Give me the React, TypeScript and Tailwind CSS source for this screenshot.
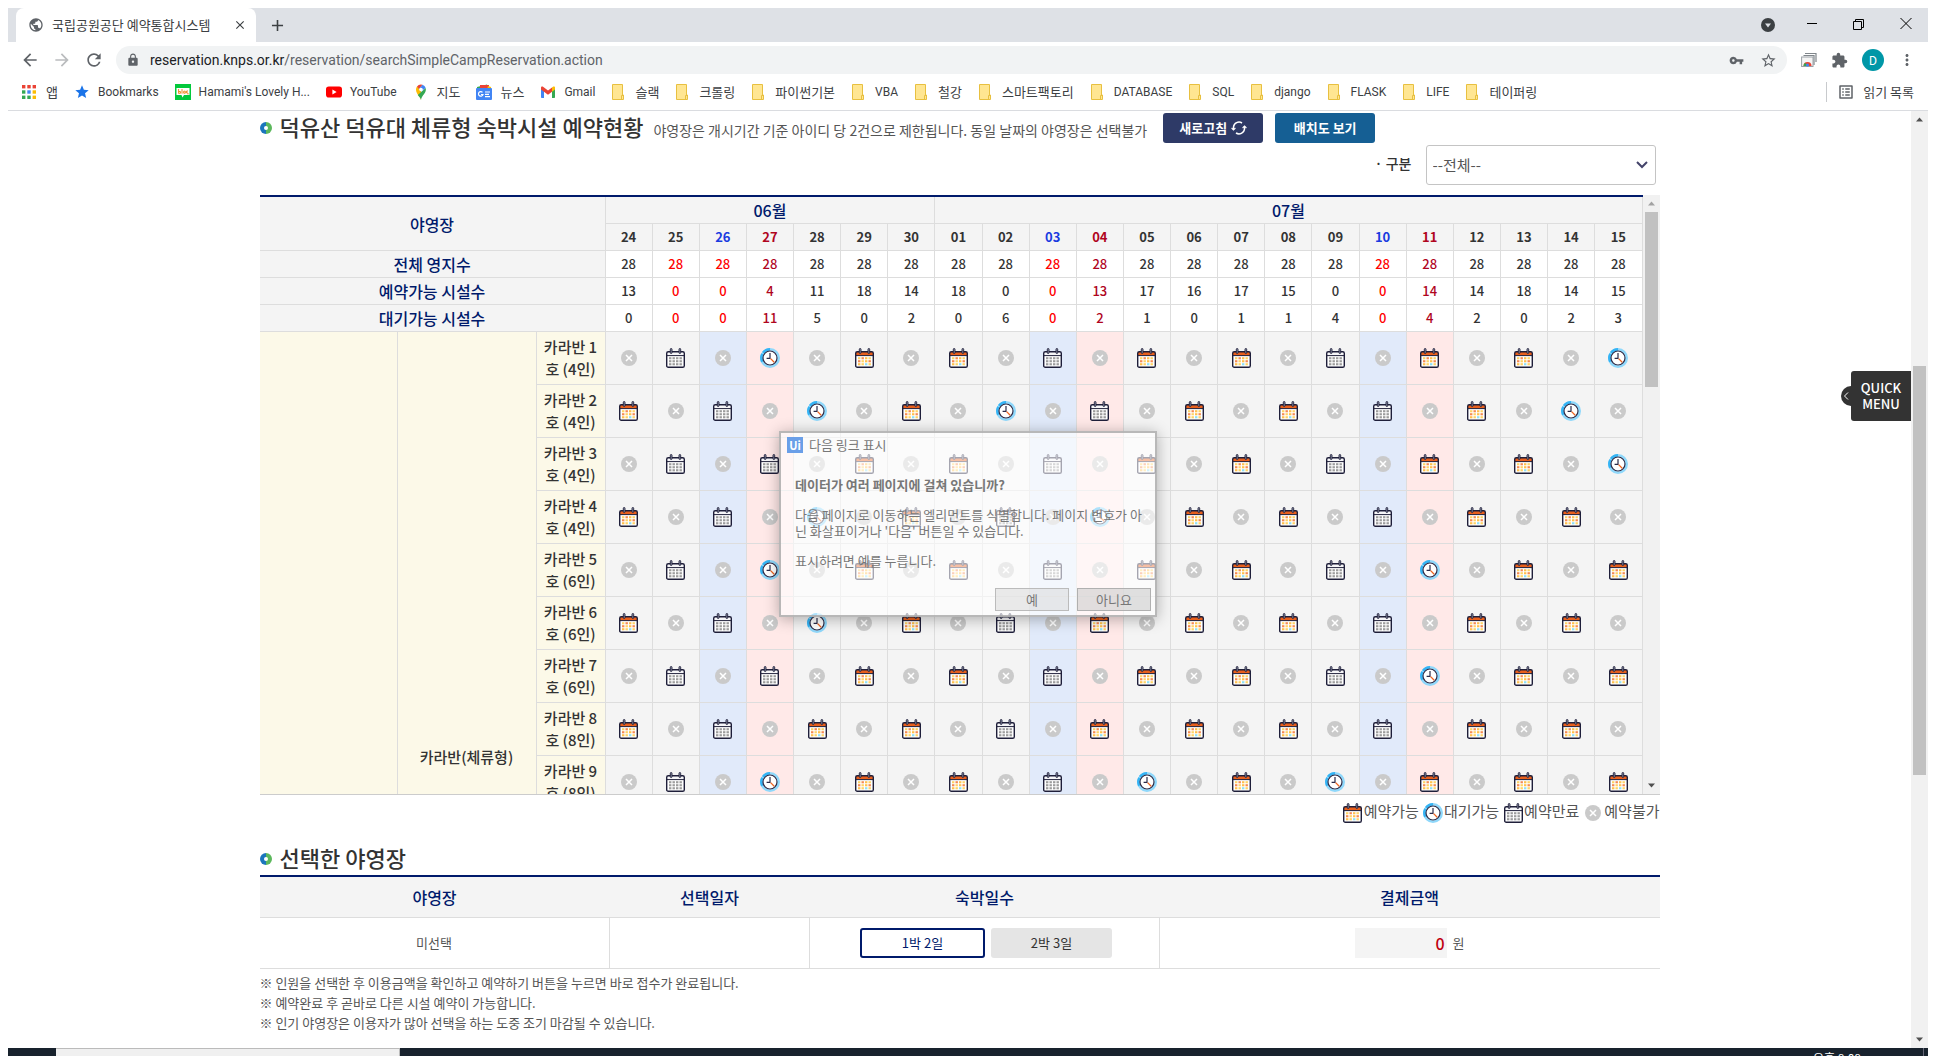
import type { ReactNode } from 'react';
import {
  MdAdd,
  MdArrowBack,
  MdArrowForward,
  MdClose,
  MdExtension,
  MdLock,
  MdMoreVert,
  MdOutlineListAlt,
  MdPublic,
  MdRefresh,
  MdStar,
  MdStarBorder,
  MdVpnKey,
} from 'react-icons/md';

type Status = 'a' | 'w' | 'e' | 'x';

const DAYS = ['24', '25', '26', '27', '28', '29', '30', '01', '02', '03', '04', '05', '06', '07', '08', '09', '10', '11', '12', '13', '14', '15'];
const SATURDAYS = [2, 9, 16];
const SUNDAYS = [3, 10, 17];
const RED_COUNTS = [1, 2, 9, 16];

const TOTALS: { label: string; values: number[] }[] = [
  { label: '전체 영지수', values: DAYS.map(() => 28) },
  { label: '예약가능 시설수', values: [13, 0, 0, 4, 11, 18, 14, 18, 0, 0, 13, 17, 16, 17, 15, 0, 0, 14, 14, 18, 14, 15] },
  { label: '대기가능 시설수', values: [0, 0, 0, 11, 5, 0, 2, 0, 6, 0, 2, 1, 0, 1, 1, 4, 0, 4, 2, 0, 2, 3] },
];

const SITES: { name: string; days: string }[] = [
  { name: '카라반 1호 (4인)', days: 'xexwxaxaxexaxaxexaxaxw' },
  { name: '카라반 2호 (4인)', days: 'axexwxaxwxexaxaxexaxwx' },
  { name: '카라반 3호 (4인)', days: 'xexexaxaxexaxaxexaxaxw' },
  { name: '카라반 4호 (4인)', days: 'axexwxaxexwxaxaxexaxax' },
  { name: '카라반 5호 (6인)', days: 'xexwxaxaxexaxaxexwxaxa' },
  { name: '카라반 6호 (6인)', days: 'axexwxaxexaxaxaxexaxax' },
  { name: '카라반 7호 (6인)', days: 'xexexaxaxexaxaxexwxaxa' },
  { name: '카라반 8호 (8인)', days: 'axexaxaxexaxaxaxexaxax' },
  { name: '카라반 9호 (8인)', days: 'xexwxaxaxexwxaxwxaxaxa' },
];

function CalendarIcon({ color }: { color: boolean }) {
  const warm = ['#ffd466', '#f58a52', '#ffc04d', '#ffd466', '#f58a52', '#ffd466', '#ffc04d', '#f58a52', '#ffc04d', '#ffd466', '#8fe0f5', '#ffd466'];
  return (
    <svg width="19" height="20" viewBox="0 0 19 20" className="shrink-0">
      <rect x="0.7" y="3.7" width="17.6" height="15.6" rx="1.6" fill="#fff" />
      <path d="M.7 7.600V5.200c0-.8.6-1.500 1.400-1.500h14.800c.8 0 1.400.7 1.400 1.500v2.400z" fill={color ? '#e85f1c' : '#f6f6f8'} />
      <rect x="0.7" y="3.7" width="17.6" height="15.6" rx="1.6" fill="none" stroke="#1f1f3a" strokeWidth="1.4" />
      <path d="M.7 7.600h17.600" stroke="#1f1f3a" strokeWidth="1" />
      <rect x="4.3" y="0.500" width="1.700" height="5" rx="0.800" fill="#9094a8" stroke="#1f1f3a" strokeWidth="0.900" />
      <rect x="13" y="0.500" width="1.700" height="5" rx="0.800" fill="#9094a8" stroke="#1f1f3a" strokeWidth="0.900" />
      {[0, 1, 2].map((r) =>
        [0, 1, 2, 3].map((c) => (
          <rect key={`${r}-${c}`} x={3 + c * 3.5} y={9.200 + r * 3} width="2.400" height="2.100" fill={color ? warm[r * 4 + c] : '#9c9c9c'} />
        )),
      )}
    </svg>
  );
}

function ClockIcon() {
  return (
    <svg width="20" height="20" viewBox="0 0 20 20" className="shrink-0">
      <circle cx="10" cy="10" r="8.700" fill="none" stroke="#8fd8fb" strokeWidth="2.600" />
      <path d="M10 1.300A8.700 8.700 0 0 0 2.400 14" fill="none" stroke="#35b4f5" strokeWidth="2.600" strokeDasharray="8 1.200" />
      <circle cx="10" cy="10" r="7" fill="#fff" stroke="#2b2b48" strokeWidth="1.200" />
      <path d="M10 5v5.400H6.600" fill="none" stroke="#2b2b48" strokeWidth="1.200" />
      <path d="M10.600 10.600l3.600 3.600" stroke="#ee6420" strokeWidth="1.300" />
    </svg>
  );
}

function UnavailableIcon() {
  return (
    <svg width="16" height="16" viewBox="0 0 16 16" className="shrink-0">
      <circle cx="8" cy="8" r="8" fill="#cacaca" />
      <path d="M5 5l6 6M11 5l-6 6" stroke="#fff" strokeWidth="1.5" />
    </svg>
  );
}

function StatusIcon({ status }: { status: Status }) {
  if (status === 'a') return <CalendarIcon color />;
  if (status === 'e') return <CalendarIcon color={false} />;
  if (status === 'w') return <ClockIcon />;
  return <UnavailableIcon />;
}

function FolderIcon() {
  return (
    <svg width="16" height="16" viewBox="0 0 16 16" className="shrink-0">
      <path d="M1.500.5h10V11h1v4.500h-11z" fill="#ffe692" stroke="#e8c040" />
      <path d="M10.500 15v-3.500H12" fill="none" stroke="#e8c040" />
    </svg>
  );
}

function AppsIcon() {
  const colors = ['#ea4335', '#ea4335', '#ea4335', '#34a853', '#4285f4', '#fbbc04', '#34a853', '#34a853', '#fbbc04'];
  return (
    <svg width="14" height="14" viewBox="0 0 14 14" className="shrink-0">
      {colors.map((c, i) => (
        <rect key={i} x={(i % 3) * 5.300} y={Math.floor(i / 3) * 5.300} width="3.400" height="3.400" fill={c} />
      ))}
    </svg>
  );
}

function BlogIcon() {
  return (
    <svg width="16" height="16" viewBox="0 0 16 16" className="shrink-0">
      <rect width="16" height="16" fill="#03c93c" />
      <path d="M1.500 4h13v7H9l-1.500 2.500L6.500 11h-5z" fill="#fff" />
      <path d="M3.600 5v4.500M3.600 7.500h1.800v1.800H3.600M7 5v4.700M8.700 7.200h1.600v2H8.700zM13 7h-1.400v2H13v1.500" stroke="#f08a24" fill="none" />
    </svg>
  );
}

function YouTubeIcon() {
  return (
    <svg width="16" height="16" viewBox="0 0 16 16" className="shrink-0">
      <rect y="2.500" width="16" height="11" rx="2.800" fill="#f00" />
      <path d="M6.400 5.600v4.800L10.600 8z" fill="#fff" />
    </svg>
  );
}

function MapsIcon() {
  return (
    <svg width="16" height="16" viewBox="0 0 16 16" className="shrink-0">
      <path d="M8 16c0-3-5-5.500-5-10.500a5 5 0 0 1 1-3l4 3z" fill="#fbbc04" />
      <path d="M4 2.500A5 5 0 0 1 9.500.7L6 5z" fill="#ea4335" />
      <path d="M9.500.7A5 5 0 0 1 12.700 4L8 7.500 6 5z" fill="#4285f4" />
      <path d="M12.700 4c1.300 5-4 7-4.700 12-.5-2-2-3.500-3.200-5z" fill="#34a853" />
      <circle cx="8" cy="5.500" r="1.800" fill="#fff" />
    </svg>
  );
}

function NewsIcon() {
  return (
    <svg width="16" height="16" viewBox="0 0 16 16" className="shrink-0">
      <path d="M1 3l10-2.500 1 4H1z" fill="#34a853" />
      <path d="M4 1h9v4H4z" fill="#ea4335" />
      <path d="M12 2l3 1v3h-4z" fill="#fbbc04" />
      <rect y="4" width="16" height="12" rx="1" fill="#4285f4" />
      <path d="M6.500 8.300A2.300 2.300 0 1 0 7 10.500H5M9 8h5M9 10.300h4M9 12.600h5" stroke="#fff" strokeWidth="1.200" fill="none" />
    </svg>
  );
}

function GmailIcon() {
  return (
    <svg width="16" height="16" viewBox="0 0 16 16" className="shrink-0">
      <path d="M1 4h3v10H1.800A.8.8 0 0 1 1 13.200z" fill="#4285f4" />
      <path d="M12 4h3v9.200a.8.8 0 0 1-.8.800H12z" fill="#34a853" />
      <path d="M12 3.500l1.300-.9c.8-.5 1.700 0 1.700 1V5.500l-3 2.200z" fill="#fbbc04" />
      <path d="M1 5.500V3.600c0-1 .9-1.500 1.700-1L8 6.500l4-3v4.200L8 10.700 1 5.500z" fill="#ea4335" />
    </svg>
  );
}

function PhotoStackIcon() {
  return (
    <svg width="16" height="16" viewBox="0 0 16 16" className="shrink-0">
      <path d="M4 1.500h11V10M2.500 3.500H13V13" fill="none" stroke="#80868b" strokeWidth="1.200" />
      <rect x="0.600" y="5" width="11.400" height="9.500" fill="#f5f5f5" stroke="#9aa0a6" />
      <path d="M2.500 14a4 4 0 0 1 8 0z" fill="#ea4335" />
      <path d="M2.500 14a4 4 0 0 1 1.800-3.200L6.500 14z" fill="#34a853" />
      <circle cx="6.500" cy="13" r="1.500" fill="#4285f4" />
    </svg>
  );
}

function Bullet() {
  return (
    <svg width="12" height="12" viewBox="0 0 12 12" className="shrink-0">
      <path d="M6 0a6 6 0 0 0 0 12z" fill="#1b75bc" />
      <path d="M6 0a6 6 0 0 1 0 12z" fill="#5cb85c" />
      <circle cx="6" cy="6" r="2" fill="#fff" />
    </svg>
  );
}

function Triangle({ up = false, color }: { up?: boolean; color: string }) {
  return (
    <svg width="17" height="17" viewBox="0 0 17 17" className="shrink-0">
      <path d={up ? 'M5 10.500h7L8.500 6.500z' : 'M5 6.500h7l-3.500 4z'} fill={color} />
    </svg>
  );
}

const FOLDERS = ['슬랙', '크롤링', '파이썬기본', 'VBA', '철강', '스마트팩토리', 'DATABASE', 'SQL', 'django', 'FLASK', 'LIFE', '테이퍼링'];

const BOOKMARKS: { label: string; icon: ReactNode }[] = [
  { label: 'Bookmarks', icon: <MdStar size={16} className="shrink-0 text-[#1a73e8]" /> },
  { label: "Hamami's Lovely H...", icon: <BlogIcon /> },
  { label: 'YouTube', icon: <YouTubeIcon /> },
  { label: '지도', icon: <MapsIcon /> },
  { label: '뉴스', icon: <NewsIcon /> },
  { label: 'Gmail', icon: <GmailIcon /> },
  ...FOLDERS.map((label) => ({ label, icon: <FolderIcon /> })),
];

function isLatin(label: string) {
  return label.charCodeAt(0) < 128;
}

function BrowserChrome() {
  return (
    <header className="shrink-0 text-[13px] text-[#3c4043]">
      <div className="flex h-[34px] items-stretch bg-[#dee1e6] pl-2">
        <div className="flex w-60 items-center rounded-t-lg bg-white pl-3 pr-2">
          <MdPublic size={16} className="shrink-0 text-[#5f6368]" />
          <span className="ml-2 flex-1 whitespace-nowrap">국립공원공단 예약통합시스템</span>
          <button type="button" aria-label="탭 닫기" className="p-px">
            <MdClose size={14} />
          </button>
        </div>
        <button type="button" aria-label="새 탭" className="ml-3 text-[#3c4043]">
          <MdAdd size={19} />
        </button>
        <div className="ml-auto flex items-center text-black">
          <button type="button" aria-label="탭 검색" className="mr-8">
            <svg width="14" height="14" viewBox="0 0 14 14">
              <circle cx="7" cy="7" r="7" fill="#3c4043" />
              <path d="M4 5.500h6L7 9.500z" fill="#dee1e6" />
            </svg>
          </button>
          <button type="button" aria-label="최소화" className="mr-9">
            <svg width="10" height="11" viewBox="0 0 10 11">
              <path d="M0 3.500h10" stroke="#000" />
            </svg>
          </button>
          <button type="button" aria-label="이전 크기로" className="mr-9">
            <svg width="11" height="16" viewBox="0 0 11 16" fill="none" stroke="#000">
              <path d="M.5 4.500h8v8h-8zM2.500 4.500v-2h8v8h-2" />
            </svg>
          </button>
          <button type="button" aria-label="닫기" className="mr-4">
            <svg width="12" height="16" viewBox="0 0 12 16" stroke="#000">
              <path d="M.5 1l11 11M11.500 1l-11 11" />
            </svg>
          </button>
        </div>
      </div>
      <div className="flex h-9 items-center pl-3 pr-3 text-[#5f6368]">
        <button type="button" aria-label="뒤로">
          <MdArrowBack size={20} />
        </button>
        <button type="button" aria-label="앞으로" className="ml-3 text-[#babcbe]">
          <MdArrowForward size={20} />
        </button>
        <button type="button" aria-label="새로고침" className="ml-3">
          <MdRefresh size={20} />
        </button>
        <div className="ml-3 flex h-7 flex-1 items-center rounded-full bg-[#f1f3f4] pl-2.5 pr-2.5">
          <MdLock size={14} className="shrink-0" />
          <p className="ml-2.5 flex-1 font-['Roboto',sans-serif] text-[14px]">
            <span className="text-[#202124]">reservation.knps.or.kr</span>/reservation/searchSimpleCampReservation.action
          </p>
          <button type="button" aria-label="비밀번호 관리">
            <MdVpnKey size={15} />
          </button>
          <button type="button" aria-label="북마크 추가" className="ml-4">
            <MdStarBorder size={17} />
          </button>
        </div>
        <div className="ml-3.5 flex items-center gap-3.5">
          <PhotoStackIcon />
          <MdExtension size={17} />
          <span className="flex h-[22px] w-[22px] items-center justify-center rounded-full bg-[#0097a7] text-[12px] text-white">D</span>
          <button type="button" aria-label="메뉴">
            <MdMoreVert size={18} />
          </button>
        </div>
      </div>
      <nav className="flex h-[33px] items-center gap-4 border-b border-[#dadce0] pl-3.5 pr-3.5 pb-1">
        <a href="#apps" className="flex items-center gap-2.5">
          <AppsIcon />앱
        </a>
        {BOOKMARKS.map((b) => (
          <a key={b.label} href="#bookmark" className="flex items-center gap-2 whitespace-nowrap">
            {b.icon}
            <span className={isLatin(b.label) ? "font-['Roboto',sans-serif] text-[12px]" : ''}>{b.label}</span>
          </a>
        ))}
        <a href="#reading" className="ml-auto flex items-center gap-2 border-l border-[#c8cacd] pl-2.5 whitespace-nowrap">
          <MdOutlineListAlt size={18} className="text-[#5f6368]" />
          읽기 목록
        </a>
      </nav>
    </header>
  );
}

const headLabel = 'border-b border-r border-[#ddd] bg-[#f4f4f4] p-0 text-[16px] font-medium leading-5 text-[#001a6b]';

function dayHeadColor(i: number) {
  if (SATURDAYS.includes(i)) return 'text-[#1a3be0]';
  if (SUNDAYS.includes(i)) return 'text-[#b0051e]';
  return 'text-[#333]';
}

function countColor(i: number) {
  if (RED_COUNTS.includes(i)) return 'text-[#ff0000]';
  if (SUNDAYS.includes(i)) return 'text-[#b0051e]';
  return 'text-[#333]';
}

function cellColor(i: number) {
  if (SATURDAYS.includes(i)) return 'bg-[#e1eafa]';
  if (SUNDAYS.includes(i)) return 'bg-[#ffe9e8]';
  return 'bg-[#f4f4f4]';
}

function AvailabilityTable() {
  return (
    <div className="mt-2.5 flex h-[600px] overflow-hidden border-b border-[#ccc]">
      <div className="min-w-0 flex-1 overflow-hidden">
        <table className="w-full table-fixed border-separate border-spacing-0 border-t-2 border-[#001a6b] text-center text-[13px] leading-5">
          <colgroup>
            <col className="w-[138px]" />
            <col className="w-[139px]" />
            <col className="w-[69px]" />
            {DAYS.map((d) => (
              <col key={d} />
            ))}
          </colgroup>
          <thead>
            <tr className="h-[27px]">
              <th colSpan={3} rowSpan={2} className={headLabel}>야영장</th>
              <th colSpan={7} className={headLabel}>06월</th>
              <th colSpan={15} className={headLabel}>07월</th>
            </tr>
            <tr className="h-[27px]">
              {DAYS.map((d, i) => (
                <th key={d} className={`border-b border-r border-[#ddd] bg-[#f4f4f4] p-0 font-bold ${dayHeadColor(i)}`}>{d}</th>
              ))}
            </tr>
            {TOTALS.map((row) => (
              <tr key={row.label} className="h-[27px]">
                <th colSpan={3} className={headLabel}>{row.label}</th>
                {row.values.map((v, i) => (
                  <td key={i} className={`border-b border-r border-[#ddd] p-0 font-medium ${countColor(i)}`}>{v}</td>
                ))}
              </tr>
            ))}
          </thead>
          <tbody>
            {SITES.map((site, r) => (
              <tr key={site.name} className="h-[53px]">
                {r === 0 && (
                  <>
                    <td rowSpan={SITES.length} className="border-r border-[#ddd] bg-[#fcf9e8]" />
                    <th rowSpan={SITES.length} className="border-r border-[#ddd] bg-[#fcf9e8] p-0 pb-[42px] align-bottom text-[15px] font-medium text-[#333]">
                      카라반(체류형)
                    </th>
                  </>
                )}
                <th className="border-b border-r border-[#ddd] bg-[#fcf9e8] px-1 py-0 text-[15px] font-medium leading-[22px] break-all text-[#333]">
                  {site.name}
                </th>
                {site.days.split('').map((s, i) => (
                  <td key={i} className={`border-b border-r border-[#ddd] p-0 ${cellColor(i)}`}>
                    <span className="flex justify-center">
                      <StatusIcon status={s as Status} />
                    </span>
                  </td>
                ))}
              </tr>
            ))}
          </tbody>
        </table>
      </div>
      <div className="flex w-[17px] shrink-0 flex-col items-center bg-[#f1f1f1]">
        <Triangle up color="#a3a3a3" />
        <div className="h-[175px] w-[13px] bg-[#c1c1c1]" />
        <div className="mt-auto">
          <Triangle color="#505050" />
        </div>
      </div>
    </div>
  );
}

function Legend() {
  const items: { status: Status; label: string }[] = [
    { status: 'a', label: '예약가능' },
    { status: 'w', label: '대기가능' },
    { status: 'e', label: '예약만료' },
    { status: 'x', label: '예약불가' },
  ];
  return (
    <ul className="mt-1 flex h-7 justify-end gap-1 text-[15px] leading-6 text-[#555]">
      {items.map((it) => (
        <li key={it.label} className="flex items-start gap-px">
          <span className="flex h-7 w-5 items-center justify-center">
            <StatusIcon status={it.status} />
          </span>
          {it.label}
        </li>
      ))}
    </ul>
  );
}

function SelectionTable() {
  const th = 'bg-[#f4f4f4] border-b border-[#ddd] p-0 text-[16px] font-medium text-[#001a6b]';
  return (
    <table className="w-full table-fixed border-separate border-spacing-0 border-t-2 border-[#001a6b] text-center text-[13px] text-[#555]">
      <colgroup>
        <col className="w-[350px]" />
        <col className="w-[200px]" />
        <col className="w-[350px]" />
        <col />
      </colgroup>
      <thead>
        <tr className="h-[41px]">
          <th className={th}>야영장</th>
          <th className={th}>선택일자</th>
          <th className={th}>숙박일수</th>
          <th className={th}>결제금액</th>
        </tr>
      </thead>
      <tbody>
        <tr className="h-[51px]">
          <td className="border-b border-r border-[#ddd] p-0">미선택</td>
          <td className="border-b border-r border-[#ddd] p-0" />
          <td className="border-b border-r border-[#ddd] p-0 pl-1">
            <div className="flex justify-center gap-1.5">
              <button type="button" className="h-[30px] w-[125px] rounded-[3px] border-2 border-[#001a6b] bg-white text-[#001a6b]">1박 2일</button>
              <button type="button" className="h-[30px] w-[121px] rounded-[3px] bg-[#e5e5e5] text-[#333]">2박 3일</button>
            </div>
          </td>
          <td className="border-b border-[#ddd] p-0">
            <label className="flex items-center justify-center gap-1.5">
              <input
                readOnly
                value="0"
                aria-label="결제금액"
                className="h-[30px] w-[92px] bg-[#f4f4f4] pr-0.5 text-right text-[16px] font-medium text-[#c00010]"
              />
              원
            </label>
          </td>
        </tr>
      </tbody>
    </table>
  );
}

function ReservationPage() {
  return (
    <main className="mx-auto w-full max-w-[1400px] text-[#333]">
      <div className="mt-0.5 flex h-[30px] items-center">
        <Bullet />
        <div className="ml-2 flex items-baseline gap-2.5 pb-1 whitespace-nowrap">
          <h2 className="text-[22px] font-medium leading-[30px]">덕유산 덕유대 체류형 숙박시설 예약현황</h2>
          <p className="text-[14px] text-[#555]">야영장은 개시기간 기준 아이디 당 2건으로 제한됩니다. 동일 날짜의 야영장은 선택불가</p>
        </div>
        <button type="button" className="ml-4 flex h-[30px] w-[100px] items-center justify-center gap-1 rounded-[3px] bg-[#2e3a67] text-[13px] font-bold text-white">
          새로고침
          <svg width="16" height="14" viewBox="0 0 16 14" fill="none" stroke="#fff" strokeWidth="1.500">
            <path d="M2.500 8.500V6A5.500 5.500 0 0 1 11 2M13.500 5.500V8A5.500 5.500 0 0 1 5 12" />
            <path d="M.6 7l1.900 2 1.900-2M11.600 7l1.900-2 1.900 2" strokeWidth="1.100" />
          </svg>
        </button>
        <button type="button" className="ml-3 h-[30px] w-[100px] rounded-[3px] bg-[#155f94] text-[13px] font-bold text-white">배치도 보기</button>
      </div>
      <div className="mt-0.5 mr-1 flex h-10 items-center justify-end">
        <label htmlFor="site-type" className="mr-3.5 pb-1 text-[14px] font-medium">· 구분</label>
        <div className="relative h-full w-[230px]">
          <select id="site-type" className="h-full w-full appearance-none rounded-[3px] border border-[#c4c4c4] bg-white px-1.5 text-[15px] text-[#555]">
            <option>--전체--</option>
          </select>
          <svg width="12" height="8" viewBox="0 0 12 8" className="pointer-events-none absolute top-4 right-2" fill="none" stroke="#44446a" strokeWidth="2">
            <path d="M1 1l5 5 5-5" />
          </svg>
        </div>
      </div>
      <AvailabilityTable />
      <Legend />
      <div className="mt-4 flex h-8 items-center">
        <Bullet />
        <h2 className="ml-2 pb-1 text-[22px] font-medium leading-7">선택한 야영장</h2>
      </div>
      <SelectionTable />
      <div className="mt-1 text-[13px] leading-5 text-[#555]">
        <p>※ 인원을 선택한 후 이용금액을 확인하고 예약하기 버튼을 누르면 바로 접수가 완료됩니다.</p>
        <p>※ 예약완료 후 곧바로 다른 시설 예약이 가능합니다.</p>
        <p>※ 인기 야영장은 이용자가 많아 선택을 하는 도중 조기 마감될 수 있습니다.</p>
      </div>
    </main>
  );
}

function NextLinkDialog() {
  return (
    <div className="pointer-events-none absolute inset-x-2 top-0 bottom-2 flex items-center justify-center">
      <section
        role="dialog"
        aria-labelledby="dialog-title"
        className="pointer-events-auto flex h-[186px] w-[378px] flex-col border-2 border-[#a8a8a8]/80 bg-white/60 text-[13px] leading-4 text-[#777] shadow-[0_2px_14px_rgba(0,0,0,0.3)]"
      >
        <div className="flex items-center gap-1.5 px-1.5 pt-1">
          <span className="flex h-4 w-4 items-center justify-center bg-[#6a9fe8] text-[11px] font-bold text-white">Ui</span>
          <h3 id="dialog-title">다음 링크 표시</h3>
        </div>
        <div className="flex flex-1 flex-col px-3.5 pt-6">
          <p className="font-bold">데이터가 여러 페이지에 걸쳐 있습니까?</p>
          <p className="mt-3.5 whitespace-nowrap">
            다음 페이지로 이동하는 엘리먼트를 식별합니다. 페이지 번호가 아
            <br />닌 화살표이거나 '다음' 버튼일 수 있습니다.
          </p>
          <p className="mt-3.5">표시하려면 예를 누릅니다.</p>
        </div>
        <div className="flex justify-end gap-2 px-1 pb-1">
          <button type="button" className="h-[23px] w-[74px] border border-[#bbb] bg-[#d8d8d8]/50">예</button>
          <button type="button" className="h-[23px] w-[74px] border border-[#b0b0b0] bg-[#c8c8c8]/55">아니요</button>
        </div>
      </section>
    </div>
  );
}

export default function App() {
  return (
    <div className="relative flex h-screen flex-col overflow-hidden bg-white px-2 pt-2 font-['Noto_Sans_CJK_KR','Noto_Sans',sans-serif]">
      <BrowserChrome />
      <div className="relative flex min-h-0 flex-1">
        <div className="min-w-0 flex-1 overflow-hidden">
          <ReservationPage />
        </div>
        <div className="flex w-[17px] shrink-0 flex-col items-center bg-[#f1f1f1]">
          <Triangle up color="#505050" />
          <div className="mt-[238px] h-[409px] w-[13px] bg-[#c1c1c1]" />
          <div className="mt-auto">
            <Triangle color="#505050" />
          </div>
        </div>
        <button type="button" className="absolute top-[260px] right-[17px] flex items-center text-[13px] font-medium leading-4 text-white">
          <span className="flex h-5 w-2.5 items-center justify-center rounded-l-full bg-[#333]">
            <svg width="6" height="8" viewBox="0 0 6 8" fill="none" stroke="#fff">
              <path d="M5 .5L1.500 4 5 7.500" />
            </svg>
          </span>
          <span className="flex h-[50px] w-[60px] flex-col items-center justify-center rounded-l-[3px] bg-[#333]">
            <span>QUICK</span>
            <span>MENU</span>
          </span>
        </button>
      </div>
      <footer className="flex h-2 shrink-0 overflow-hidden bg-[#18222d] text-[12px] leading-none text-white">
        <div className="ml-12 w-[344px] border-t border-r border-[#bbb] bg-[#f0f0f0]" />
        <span className="ml-auto pt-1">오후 8:08</span>
        <span className="mr-1 ml-[62px] w-px bg-[#667]" />
      </footer>
      <NextLinkDialog />
    </div>
  );
}
